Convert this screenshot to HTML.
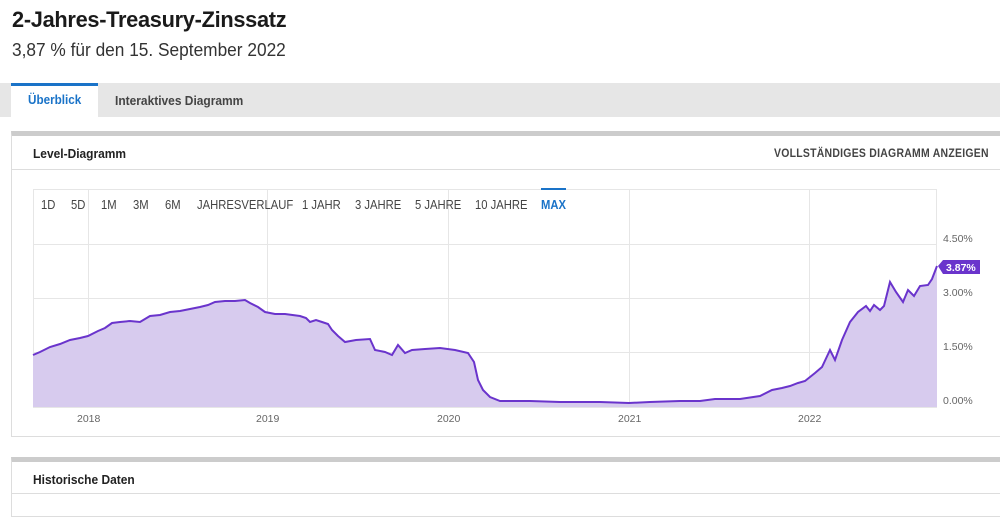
<!DOCTYPE html>
<html><head><meta charset="utf-8"><style>
*{margin:0;padding:0;box-sizing:border-box}
body{width:1000px;height:501px;overflow:hidden;background:#fff;font-family:"Liberation Sans",sans-serif;color:#222;position:relative}
.abs{position:absolute;white-space:nowrap}
h1{position:absolute;left:12px;top:7px;font-size:22px;font-weight:bold;letter-spacing:-0.3px;color:#1a1a1a;transform:scaleX(0.99);transform-origin:left}
.sub{left:12px;top:40px;font-size:18px;color:#333;transform:scaleX(0.96);transform-origin:left}
.tabs{position:absolute;left:0;top:83px;width:1000px;height:34px;background:#e6e6e6}
.tab1{position:absolute;left:11px;top:83px;width:87px;height:34px;background:#fff;border-top:3px solid #1a73c8}
.tab1t{left:28px;top:92px;color:#1a73c8;font-weight:bold;font-size:13px;transform:scaleX(0.9);transform-origin:left}
.tab2{left:115px;top:93px;font-size:13px;font-weight:bold;color:#444;transform:scaleX(0.92);transform-origin:left}
.card{position:absolute;left:11px;top:131px;width:1000px;height:306px;border:1px solid #ddd;border-top:5px solid #ccc}
.card2{position:absolute;left:11px;top:457px;width:1000px;height:60px;border:1px solid #ddd;border-top:5px solid #ccc}
.ct{font-size:13px;font-weight:bold;color:#222;transform:scaleX(0.92);transform-origin:left}
.rng{top:198px;font-size:12.5px;color:#444;transform:scaleX(0.9);transform-origin:left}
.ax{font-size:10.5px;color:#666}
</style></head><body>
<h1>2-Jahres-Treasury-Zinssatz</h1>
<div class="abs sub">3,87 % für den 15. September 2022</div>
<div class="tabs"></div>
<div class="tab1"></div>
<div class="abs tab1t">Überblick</div>
<div class="abs tab2">Interaktives Diagramm</div>
<div class="card"></div>
<div class="abs" style="left:11px;top:169px;width:989px;height:1px;background:#ddd"></div>
<div class="abs ct" style="left:33px;top:146px">Level-Diagramm</div>
<div class="abs ct" style="left:774px;top:146px;font-size:12px;color:#444;letter-spacing:0.3px;transform:scaleX(0.87)">VOLLSTÄNDIGES DIAGRAMM ANZEIGEN</div>
<svg class="abs" style="left:0;top:0" width="1000" height="501">
<g stroke="#e6e6e6" stroke-width="1" fill="none">
<rect x="33.5" y="189.5" width="903" height="218"/>
<line x1="33" y1="244.5" x2="937" y2="244.5"/>
<line x1="33" y1="298.5" x2="937" y2="298.5"/>
<line x1="33" y1="352.5" x2="937" y2="352.5"/>
<line x1="88.5" y1="189" x2="88.5" y2="407"/>
<line x1="267.5" y1="189" x2="267.5" y2="407"/>
<line x1="448.5" y1="189" x2="448.5" y2="407"/>
<line x1="629.5" y1="189" x2="629.5" y2="407"/>
<line x1="809.5" y1="189" x2="809.5" y2="407"/>
</g>
<polygon fill="#d7cbee" points="33,407 33,355 40,352 50,347 60,344 70,340 80,338 88,336 98,331 105,328 112,323 120,322 130,321 140,322 150,316 160,315 170,312 180,311 190,309 200,307 208,305 215,302 225,301 235,301 245,300 250,303 258,307 265,312 275,314 285,314 300,316 306,318 310,322 316,320 322,322 328,324 332,330 338,336 345,342 356,340 370,339 375,350 385,352 392,355 398,345 405,353 412,350 425,349 440,348 455,350 468,353 474,362 478,380 483,390 490,397 500,401 530,401 560,402 600,402 629,403 650,402 680,401 700,401 715,399 740,399 760,396 772,390 782,388 790,386 798,383 805,381 815,373 822,367 830,350 835,360 842,340 850,322 858,312 866,306 870,311 874,305 880,310 884,306 890,282 896,292 903,302 908,290 914,296 920,286 928,285 932,279 937,266 937,407"/>
<polyline fill="none" stroke="#6a34cc" stroke-width="2" points="33,355 40,352 50,347 60,344 70,340 80,338 88,336 98,331 105,328 112,323 120,322 130,321 140,322 150,316 160,315 170,312 180,311 190,309 200,307 208,305 215,302 225,301 235,301 245,300 250,303 258,307 265,312 275,314 285,314 300,316 306,318 310,322 316,320 322,322 328,324 332,330 338,336 345,342 356,340 370,339 375,350 385,352 392,355 398,345 405,353 412,350 425,349 440,348 455,350 468,353 474,362 478,380 483,390 490,397 500,401 530,401 560,402 600,402 629,403 650,402 680,401 700,401 715,399 740,399 760,396 772,390 782,388 790,386 798,383 805,381 815,373 822,367 830,350 835,360 842,340 850,322 858,312 866,306 870,311 874,305 880,310 884,306 890,282 896,292 903,302 908,290 914,296 920,286 928,285 932,279 937,266"/>
<polygon fill="#6a34cc" points="938,266 943,260 980,260 980,274 943,274"/>
<text x="946" y="271" font-family="Liberation Sans" font-size="10.5" font-weight="bold" fill="#fff">3.87%</text>
<line x1="541" y1="189" x2="566" y2="189" stroke="#1a73c8" stroke-width="2"/>
</svg>
<div class="abs rng" style="left:41px">1D</div>
<div class="abs rng" style="left:71px">5D</div>
<div class="abs rng" style="left:101px">1M</div>
<div class="abs rng" style="left:133px">3M</div>
<div class="abs rng" style="left:165px">6M</div>
<div class="abs rng" style="left:197px">JAHRESVERLAUF</div>
<div class="abs rng" style="left:302px">1 JAHR</div>
<div class="abs rng" style="left:355px">3 JAHRE</div>
<div class="abs rng" style="left:415px">5 JAHRE</div>
<div class="abs rng" style="left:475px">10 JAHRE</div>
<div class="abs rng" style="left:541px;color:#1a73c8;font-weight:bold">MAX</div>
<div class="abs ax" style="left:943px;top:233px">4.50%</div>
<div class="abs ax" style="left:943px;top:287px">3.00%</div>
<div class="abs ax" style="left:943px;top:341px">1.50%</div>
<div class="abs ax" style="left:943px;top:395px">0.00%</div>
<div class="abs ax" style="left:77px;top:413px">2018</div>
<div class="abs ax" style="left:256px;top:413px">2019</div>
<div class="abs ax" style="left:437px;top:413px">2020</div>
<div class="abs ax" style="left:618px;top:413px">2021</div>
<div class="abs ax" style="left:798px;top:413px">2022</div>
<div class="card2"></div>
<div class="abs" style="left:11px;top:493px;width:989px;height:1px;background:#ddd"></div>
<div class="abs ct" style="left:33px;top:472px">Historische Daten</div>
</body></html>
